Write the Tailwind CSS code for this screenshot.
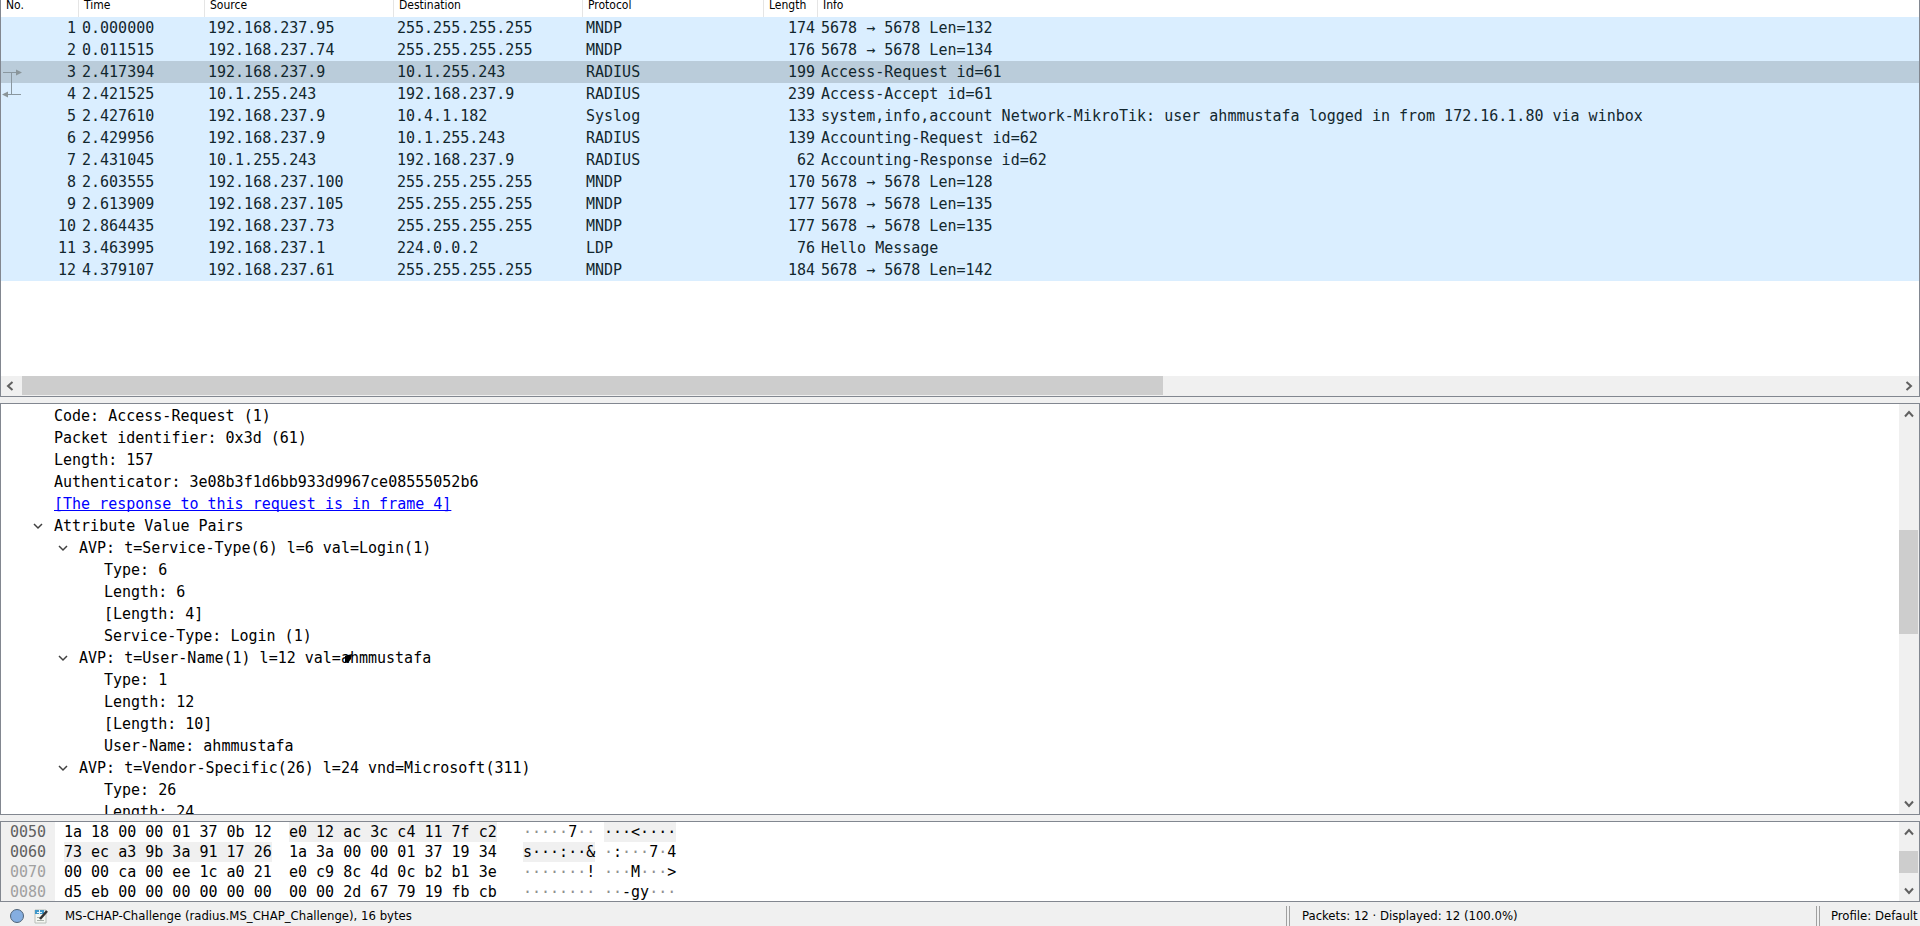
<!DOCTYPE html>
<html lang="en">
<head>
    <meta charset="UTF-8">
    <meta name="viewport" content="width=device-width, initial-scale=1.0">
    <title>Wireshark</title>
    <script src="https://cdn.jsdelivr.net/npm/@tailwindcss/browser@4"></script>
</head>
<body class="bg-[#f0f0f0] text-black font-['DejaVu_Sans_Condensed','DejaVu_Sans',sans-serif] text-[13px]">
    <div class="flex flex-col h-screen overflow-hidden">

        <!-- Packet list -->
        <section class="flex flex-col flex-[396] min-h-0 bg-white border-x border-b border-[#828790] overflow-hidden">
            <div class="relative flex-1 min-h-0">
                <table class="w-full table-fixed border-separate border-spacing-0 whitespace-nowrap">
                    <colgroup>
                        <col class="w-[78px]">
                        <col class="w-[126px]">
                        <col class="w-[189px]">
                        <col class="w-[189px]">
                        <col class="w-[181px]">
                        <col class="w-[54px]">
                        <col>
                    </colgroup>
                    <thead>
                        <tr class="h-[17px] text-left text-xs leading-[11px] align-top">
                            <th class="p-0 pl-[5px] font-normal border-r border-[#e5e5e5]">No.</th>
                            <th class="p-0 pl-[5px] font-normal border-r border-[#e5e5e5]">Time</th>
                            <th class="p-0 pl-[5px] font-normal border-r border-[#e5e5e5]">Source</th>
                            <th class="p-0 pl-[5px] font-normal border-r border-[#e5e5e5]">Destination</th>
                            <th class="p-0 pl-[5px] font-normal border-r border-[#e5e5e5]">Protocol</th>
                            <th class="p-0 pl-[5px] font-normal border-r border-[#e5e5e5]">Length</th>
                            <th class="p-0 pl-[5px] font-normal">Info</th>
                        </tr>
                    </thead>
                    <tbody id="packets" class="font-['DejaVu_Sans_Mono',monospace] text-[15px] leading-[22px] text-[#12272e]"></tbody>
                </table>
                <!-- Request / response markers -->
                <svg class="absolute left-0 top-[61px]" width="24" height="44" fill="none" stroke="#8a979f" aria-hidden="true">
                    <path d="M2 11.500H15M10.500 12V33M6 33.500H20"/>
                    <path d="M15 8.500L21 11.500L15 14.500ZM7 30.500L1 33.500L7 36.500Z" fill="#8a9599" stroke="none"/>
                </svg>
            </div>
            <div class="flex h-5 bg-[#f0f0f0]">
                <button class="w-[21px] pr-1 flex items-center justify-center" aria-label="Scroll left">
                    <svg width="8" height="10" fill="none" stroke="#606060" stroke-width="2"><path d="M6.500 1L2 5L6.500 9"/></svg>
                </button>
                <div class="flex-[1141] h-[19px] bg-[#cdcdcd]"></div>
                <div class="flex-[736]"></div>
                <button class="w-5 flex items-center justify-center" aria-label="Scroll right">
                    <svg width="8" height="10" fill="none" stroke="#606060" stroke-width="2"><path d="M1.500 1L6 5L1.500 9"/></svg>
                </button>
            </div>
        </section>

        <!-- Packet details -->
        <section class="flex flex-[410] min-h-0 mt-1.5 bg-white border border-[#828790] overflow-hidden">
            <ul id="details" class="flex-1 pt-px overflow-hidden whitespace-pre font-['DejaVu_Sans_Mono',monospace] text-[15px] leading-[22px]"></ul>
            <div class="flex flex-col w-5 bg-[#f0f0f0]">
                <button class="h-5 flex items-center justify-center" aria-label="Scroll up">
                    <svg width="10" height="8" fill="none" stroke="#606060" stroke-width="2"><path d="M1 6.500L5 2L9 6.500"/></svg>
                </button>
                <div class="flex-[106]"></div>
                <div class="flex-[104] w-[19px] bg-[#cdcdcd]"></div>
                <div class="flex-[160]"></div>
                <button class="h-5 flex items-center justify-center" aria-label="Scroll down">
                    <svg width="10" height="8" fill="none" stroke="#606060" stroke-width="2"><path d="M1 1.500L5 6L9 1.500"/></svg>
                </button>
            </div>
        </section>

        <!-- Packet bytes -->
        <section class="flex h-[81px] shrink-0 mt-1.5 bg-white border border-[#828790] overflow-hidden">
            <div id="bytes" class="flex-1 overflow-hidden font-['DejaVu_Sans_Mono',monospace] text-[15px] leading-5"></div>
            <div class="flex flex-col w-5 bg-[#f0f0f0]">
                <button class="h-5 flex items-center justify-center" aria-label="Scroll up">
                    <svg width="10" height="8" fill="none" stroke="#606060" stroke-width="2"><path d="M1 6.500L5 2L9 6.500"/></svg>
                </button>
                <div class="flex-[9]"></div>
                <div class="flex-[22] w-[19px] bg-[#cdcdcd]"></div>
                <div class="flex-[8]"></div>
                <button class="h-5 flex items-center justify-center" aria-label="Scroll down">
                    <svg width="10" height="8" fill="none" stroke="#606060" stroke-width="2"><path d="M1 1.500L5 6L9 1.500"/></svg>
                </button>
            </div>
        </section>

        <!-- Status bar -->
        <footer class="flex h-6 shrink-0 items-center whitespace-nowrap pt-1 pl-2.5">
            <button class="mr-2.5" aria-label="Expert information">
                <svg width="14" height="14"><circle cx="7" cy="7" r="6.500" fill="#85aee0" stroke="#4f6377"/></svg>
            </button>
            <button aria-label="Capture file comment">
                <svg width="15" height="15">
                    <path d="M1 1h11v13h-11z" fill="#f5f7f2" stroke="#b9beb9"/>
                    <path d="M1 1h9v4h-9z" fill="#3e97c9"/>
                    <path d="M5.500 1v5M3 3.500h5" stroke="#e8f4fa"/>
                    <path d="M3 8.500h3M3 11.500h7" stroke="#a9b0a9"/>
                    <path d="M6 10L13 2" stroke="#333" stroke-width="2.500"/>
                </svg>
            </button>
            <span class="flex-1 pl-4">MS-CHAP-Challenge (radius.MS_CHAP_Challenge), 16 bytes</span>
            <span class="w-1 h-5 border-x border-[#a0a0a0]"></span>
            <span class="w-[526px] pl-3">Packets: 12 · Displayed: 12 (100.0%)</span>
            <span class="w-1 h-5 border-x border-[#a0a0a0]"></span>
            <button class="w-[100px] pl-[11px] text-left">Profile: Default</button>
        </footer>
    </div>

    <script>
        const packets = [
            [1, '0.000000', '192.168.237.95', '255.255.255.255', 'MNDP', 174, '5678 → 5678 Len=132'],
            [2, '0.011515', '192.168.237.74', '255.255.255.255', 'MNDP', 176, '5678 → 5678 Len=134'],
            [3, '2.417394', '192.168.237.9', '10.1.255.243', 'RADIUS', 199, 'Access-Request id=61'],
            [4, '2.421525', '10.1.255.243', '192.168.237.9', 'RADIUS', 239, 'Access-Accept id=61'],
            [5, '2.427610', '192.168.237.9', '10.4.1.182', 'Syslog', 133, 'system,info,account Network-MikroTik: user ahmmustafa logged in from 172.16.1.80 via winbox'],
            [6, '2.429956', '192.168.237.9', '10.1.255.243', 'RADIUS', 139, 'Accounting-Request id=62'],
            [7, '2.431045', '10.1.255.243', '192.168.237.9', 'RADIUS', 62, 'Accounting-Response id=62'],
            [8, '2.603555', '192.168.237.100', '255.255.255.255', 'MNDP', 170, '5678 → 5678 Len=128'],
            [9, '2.613909', '192.168.237.105', '255.255.255.255', 'MNDP', 177, '5678 → 5678 Len=135'],
            [10, '2.864435', '192.168.237.73', '255.255.255.255', 'MNDP', 177, '5678 → 5678 Len=135'],
            [11, '3.463995', '192.168.237.1', '224.0.0.2', 'LDP', 76, 'Hello Message'],
            [12, '4.379107', '192.168.237.61', '255.255.255.255', 'MNDP', 184, '5678 → 5678 Len=142'],
        ];
        document.getElementById('packets').innerHTML = packets.map(row => {
            const bg = row[0] === 3 ? 'bg-[#baccda]' : 'bg-[#daeeff]';
            const cells = row.map((v, i) => `<td class="py-0 px-[3px] ${i === 0 || i === 5 ? 'text-right' : ''}">${v}</td>`);
            return `<tr class="h-[22px] ${bg}">${cells.join('')}</tr>`;
        }).join('');

        // [level, text, kind]
        const details = [
            [1, 'Code: Access-Request (1)'],
            [1, 'Packet identifier: 0x3d (61)'],
            [1, 'Length: 157'],
            [1, 'Authenticator: 3e08b3f1d6bb933d9967ce08555052b6'],
            [1, '[The response to this request is in frame 4]', 'link'],
            [1, 'Attribute Value Pairs', 'open'],
            [2, 'AVP: t=Service-Type(6) l=6 val=Login(1)', 'open'],
            [3, 'Type: 6'],
            [3, 'Length: 6'],
            [3, '[Length: 4]'],
            [3, 'Service-Type: Login (1)'],
            [2, 'AVP: t=User-Name(1) l=12 val=<span class="relative">a<svg class="absolute left-0 top-[3px]" width="12" height="12" aria-hidden="true"><path d="M4 4L7 3L11 2L10 7L7 11L4 10Z"/></svg></span>hmmustafa', 'open'],
            [3, 'Type: 1'],
            [3, 'Length: 12'],
            [3, '[Length: 10]'],
            [3, 'User-Name: ahmmustafa'],
            [2, 'AVP: t=Vendor-Specific(26) l=24 vnd=Microsoft(311)', 'open'],
            [3, 'Type: 26'],
            [3, 'Length: 24'],
        ];
        const indent = { 1: 'pl-[28px]', 2: 'pl-[53px]', 3: 'pl-[78px]' };
        const arrow = '<svg width="10" height="7" fill="none" stroke="#404040" stroke-width="1.500"><path d="M1 1L5 5L9 1"/></svg>';
        document.getElementById('details').innerHTML = details.map(([level, text, kind]) => {
            const label = kind === 'link' ? `<a href="#" class="text-[#0000ff] underline underline-offset-1 [text-decoration-skip-ink:none]">${text}</a>` : `<span>${text}</span>`;
            const toggle = kind === 'open' ? `<button class="w-[25px] pl-1" aria-label="Collapse">${arrow}</button>` : '<span class="w-[25px]"></span>';
            return `<li class="flex items-center h-[22px] ${indent[level]}">${toggle}${label}</li>`;
        }).join('');

        // {..} is the selected field, dots are unprintable bytes
        const bytes = [
            ['0050', '1a 18 00 00 01 37 0b 12', '{e0 12 ac 3c c4 11 7f c2}', '·····7··', '{···&lt;····}'],
            ['0060', '{73 ec a3 9b 3a 91 17 26}', '1a 3a 00 00 01 37 19 34', '{s···:··&amp;}', '·:···7·4'],
            ['0070', '00 00 ca 00 ee 1c a0 21', 'e0 c9 8c 4d 0c b2 b1 3e', '·······!', '···M···&gt;'],
            ['0080', 'd5 eb 00 00 00 00 00 00', '00 00 2d 67 79 19 fb cb', '········', '··-gy···'],
        ];
        const mark = s => s[0] === '{'
            ? `<span class="block h-5 bg-[#f0f0f0]">${s.slice(1, -1)}</span>`
            : `<span class="block h-5">${s.replace(/·+/g, '<span class="text-[#909090]">$&</span>')}</span>`;
        document.getElementById('bytes').innerHTML = bytes.map(([offset, a, b, c, d], i) => `
            <div class="flex h-5 whitespace-pre"><span class="w-[54px] pl-[9px] mr-[9px] bg-[#f0f0f0] ${i < 2 ? 'text-[#606060]' : 'text-[#a0a0a0]'}">${offset}</span><span class="w-[225px] flex">${mark(a)}</span><span class="w-[234px] flex">${mark(b)}</span><span class="w-[81px] flex">${mark(c)}</span>${mark(d)}</div>`).join('');
    </script>
</body>
</html>
